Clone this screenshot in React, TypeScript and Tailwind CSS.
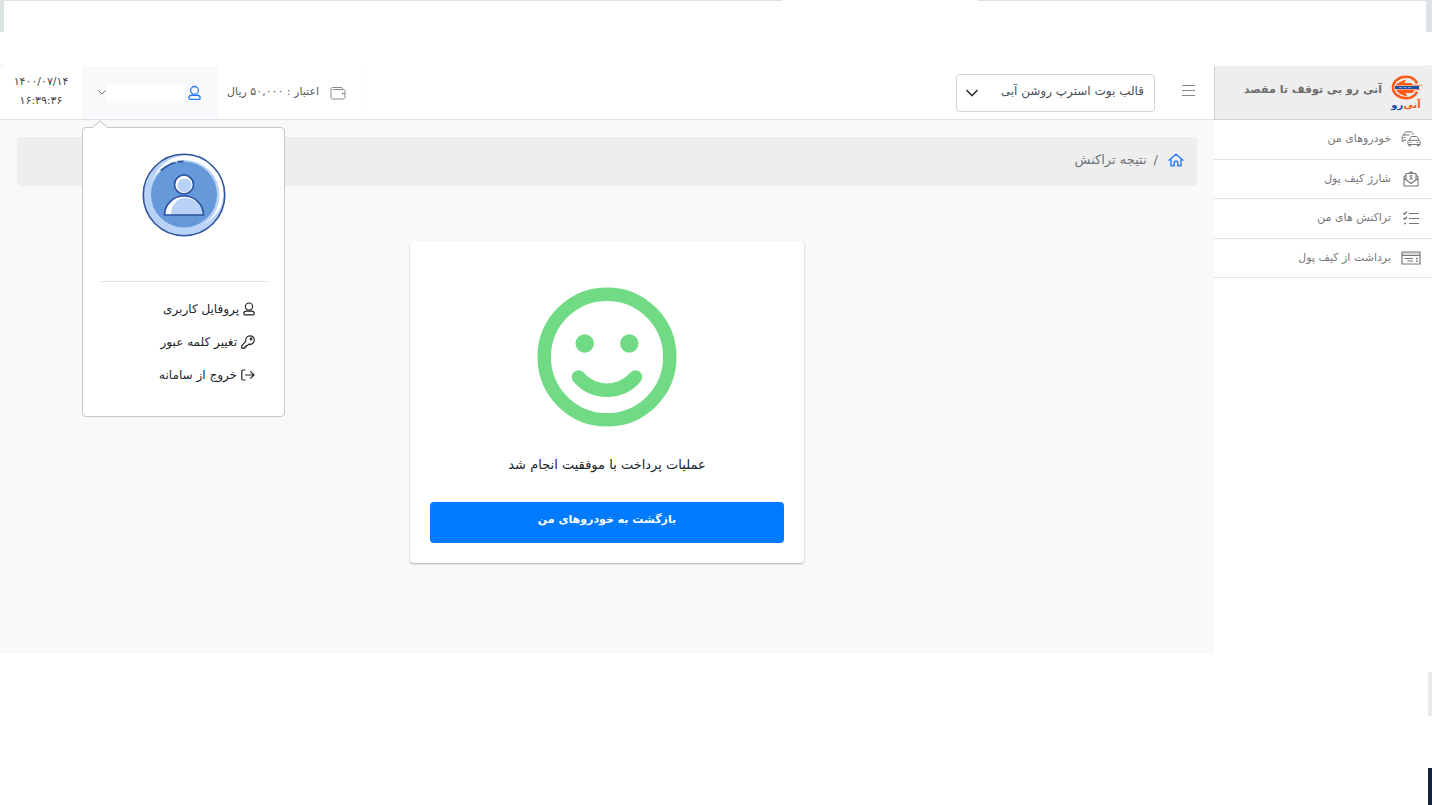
import React from 'react';

interface IconProps {
    className?: string;
}

const UserIcon: React.FC<IconProps> = ({ className }) => (
    <svg viewBox="0 0 14 16" className={className} fill="none" stroke="currentColor" strokeWidth="1.4" aria-hidden="true">
        <circle cx="7" cy="5.2" r="4.2" />
        <path d="M4 10.400h6c2 0 3 1.200 3 2.600v.600c0 .900-.4 1.300-1.300 1.300H2.300c-.9 0-1.300-.4-1.300-1.300V13c0-1.400 1-2.600 3-2.600z" />
    </svg>
);

const HomeIcon: React.FC<IconProps> = ({ className }) => (
    <svg viewBox="0 0 16 14" className={className} fill="none" stroke="currentColor" strokeWidth="1.4" strokeLinecap="round" strokeLinejoin="round" aria-hidden="true">
        <path d="M1 7.200 8 1.200l7 6M3 5.800v7h3.200V9.400a1.200 1.200 0 0 1 1.200-1.200h1.200a1.200 1.200 0 0 1 1.200 1.200v3.400H13v-7" />
    </svg>
);

const WalletIcon: React.FC<IconProps> = ({ className }) => (
    <svg viewBox="0 0 16 14" className={className} fill="none" stroke="currentColor" aria-hidden="true">
        <path d="M12.500 3.500V2.500c0-.6-.4-1-1-1H2.500c-1 0-1.500.6-1.500 1.500v8.500c0 .8.600 1.500 1.500 1.500h11c.8 0 1.500-.6 1.500-1.500V5c0-.9-.6-1.500-1.500-1.500H2.500" />
        <path d="M15 7.500h-2.500M12.500 7v1.500" />
    </svg>
);

const KeyIcon: React.FC<IconProps> = ({ className }) => (
    <svg viewBox="0 0 14 14" className={className} fill="none" stroke="currentColor" strokeWidth="1.2" strokeLinejoin="round" aria-hidden="true">
        <path d="M4.800 6.400C4.100 3.500 6 .8 9 .8c2.500 0 4.300 1.900 4.300 4.200 0 3-2.700 4.900-5.500 4.200L6.500 10.500H5.200v1.300H3.900v1.400H.8v-2.600z" />
        <circle cx="10" cy="4" r=".8" fill="currentColor" />
    </svg>
);

const LogoutIcon: React.FC<IconProps> = ({ className }) => (
    <svg viewBox="0 0 14 12" className={className} fill="none" stroke="currentColor" strokeWidth="1.2" strokeLinecap="round" strokeLinejoin="round" aria-hidden="true">
        <path d="M4 1H2C1.300 1 .8 1.500.8 2.200v7.600c0 .7.500 1.200 1.200 1.200h2M4.500 6H13M9.500 2.600 13 6 9.500 9.400" />
    </svg>
);

const CarsIcon = () => (
    <svg viewBox="0 0 20 16" className="h-4 w-5" fill="none" stroke="currentColor" strokeLinecap="round" strokeLinejoin="round" aria-hidden="true">
        <path d="M5 9H3v1.300H1.200V5.500L2.600 4 4 1.600C4.400 1 5 .8 5.600.8h4c.7 0 1.200.3 1.600.9l1 1.800M2.600 4h5.600M2.800 6.500h1.400" />
        <path d="M8.200 9.300 9.500 6.500c.3-.7.700-1 1.400-1h4.400c.7 0 1.100.3 1.400 1L18 9.300M8.200 9.300H18l1.200 1.200v3H7v-3zM8 13.500v1.500h1.500v-1.500M16.500 13.500v1.500H18v-1.500M9 11.400h1M16.200 11.400h1" />
    </svg>
);

const ChargeIcon = () => (
    <svg viewBox="0 0 16 16" className="size-4" fill="none" stroke="currentColor" strokeWidth="1.1" strokeLinejoin="round" aria-hidden="true">
        <path d="M3 4.200 1 5.800v9.200h14V5.800l-2-1.600M1 7.500 8 12.500l7-5M3 8.500V2.500h10v6M5.500 2.500 8 .8l2.500 1.700" />
        <path d="M9.500 4.800C9 4.400 6.700 4.100 6.700 5.400c0 1.200 2.700.5 2.700 1.800 0 1.200-2.300 1.100-2.900.5M8 3.900v5" strokeWidth=".8" />
    </svg>
);

const ListIcon = () => (
    <svg viewBox="0 0 16 14" className="h-3.5 w-4" fill="none" stroke="currentColor" aria-hidden="true">
        <path d="M6 2.500h10M6 7.500h10M6 12.500h10" strokeWidth="1.2" />
        <path d="m.5 2 1.200 1.200L4 .7M.5 7l1.200 1.200L4 5.700M1.200 12.500h1.800" strokeWidth="1.3" />
    </svg>
);

const CardIcon = () => (
    <svg viewBox="0 0 20 14" className="h-3.5 w-5" fill="none" stroke="currentColor" strokeWidth="1.2" aria-hidden="true">
        <path d="M1 1h18v12H1zM1 4.500h18" />
        <path d="M1 2.700h18" strokeWidth="2.4" opacity=".3" />
        <path d="M3.500 7.500h8.500M6.500 10h5.500" />
        <path d="M15 7.500h1.800M15 10.200h1.800" strokeWidth="1.6" />
    </svg>
);

const Logo = () => (
    <div className="flex w-8 flex-col items-center">
        <svg viewBox="0 0 32 25" className="h-[25px] w-8" aria-hidden="true">
            <path d="M27 8.500C25 4 21 1.800 16 1.800 8.500 1.800 3 6.500 3 12.500s5.500 10.700 13 10.700c5 0 9-2.200 11-6.500" fill="none" stroke="#ff5a16" strokeWidth="2.6" />
            <path d="M5.500 10.500C7 8 11 6 16 4.500l-1.500 3.500H21l3 2.500zM6 14.500h19L22.500 18h-7l2 3.500C12 20.500 7.500 18 6 14.500z" fill="#ff5a16" />
            <path d="M5 12.500h24" stroke="#1c4fa1" strokeWidth="3" />
            <path d="M9 12.500h14" stroke="#8fb0de" strokeWidth=".8" strokeDasharray="3 1.500" />
            <path d="M24 10.300h8M25 14.500h5" stroke="#ff5a16" strokeWidth=".8" />
        </svg>
        <span className="text-[10px] leading-[10px] font-bold whitespace-nowrap">
            <span className="text-[#ff5a16]">آنی‌</span>
            <span className="text-[#1c4fa1]">رو</span>
        </span>
    </div>
);

const Avatar = () => (
    <svg viewBox="0 0 84 84" className="size-[84px]" aria-hidden="true">
        <circle cx="42" cy="42" r="40" fill="#b9d2f8" />
        <circle cx="45.500" cy="38.500" r="36.500" fill="#fff" />
        <circle cx="42.500" cy="42" r="35" fill="#b9d2f8" />
        <circle cx="42" cy="41.500" r="33" fill="#6699da" />
        <circle cx="42" cy="42" r="40.700" fill="none" stroke="#2a52a0" strokeWidth="1.6" />
        <path d="M19 17.500A34 34 0 0 1 33.500 9.500M35.500 8.900a34 34 0 0 1 6-.6" fill="none" stroke="#2a52a0" strokeWidth="1.8" />
        <circle cx="42" cy="31.500" r="9.500" fill="#fff" />
        <circle cx="42.500" cy="32.500" r="7" fill="#b9d2f8" />
        <circle cx="42" cy="31.500" r="9.500" fill="none" stroke="#2a52a0" strokeWidth="1.7" />
        <path d="M22.500 62a19.500 19 0 0 1 39 0z" fill="#fff" />
        <path d="M29 62c0-10 6-17 14-17s18 7 18 17z" fill="#b9d2f8" />
        <path d="M22.500 62a19.500 19 0 0 1 39 0z" fill="none" stroke="#2a52a0" strokeWidth="1.7" />
    </svg>
);

const Smile = () => (
    <svg viewBox="0 0 140 140" className="size-[140px]" fill="none" stroke="#70db84" strokeWidth="13.5" aria-hidden="true">
        <circle cx="70" cy="70" r="62.800" />
        <circle cx="47.700" cy="56.500" r="9.200" fill="#70db84" stroke="none" />
        <circle cx="92.300" cy="56.500" r="9.200" fill="#70db84" stroke="none" />
        <path d="M41.500 90a37.500 37.500 0 0 0 57 0" strokeLinecap="round" />
    </svg>
);

const menuItems = [
    { label: 'خودروهای من', icon: <CarsIcon /> },
    { label: 'شارژ کیف پول', icon: <ChargeIcon /> },
    { label: 'تراکنش های من', icon: <ListIcon /> },
    { label: 'برداشت از کیف پول', icon: <CardIcon /> },
];

const profileItems = [
    { label: 'پروفایل کاربری', icon: <UserIcon className="h-3.5 w-3" /> },
    { label: 'تغییر کلمه عبور', icon: <KeyIcon className="size-3.5" /> },
    { label: 'خروج از سامانه', icon: <LogoutIcon className="h-3 w-3.5" /> },
];

const Sidebar = () => (
    <aside className="w-[218px] shrink-0">
        <div className="flex h-[54px] items-center gap-2 border-b border-l border-[#d0d0d0] bg-[#eeeeee] pr-[10px]">
            <Logo />
            <span className="pb-1 text-[11px] font-bold whitespace-nowrap text-[#6c6c6c]">آنی رو بی توقف تا مقصد</span>
        </div>
        <nav className="grid h-[158px] grid-rows-4">
            {menuItems.map((item) => (
                <a key={item.label} href="#" className="flex items-center gap-[10px] border-b border-[#dee2e6] pr-[11px] text-[#777777]">
                    <span className="flex w-5 justify-center">{item.icon}</span>
                    <span className="text-[11px]">{item.label}</span>
                </a>
            ))}
        </nav>
    </aside>
);

const ProfileMenu = () => (
    <div className="absolute top-[61px] left-0 z-10 w-[203px] rounded border border-[#c8c8c8] bg-white px-[17px] py-[25px]">
        <svg viewBox="0 0 16 8" className="absolute -top-2 left-[9px] h-2 w-4" aria-hidden="true">
            <path d="M0 8 8 1l8 7z" fill="#fff" />
            <path d="M0 8 8 1l8 7" fill="none" stroke="#bbbbbb" />
        </svg>
        <div className="flex justify-center border-b border-[#dee2e6] pb-11">
            <Avatar />
        </div>
        <ul className="pt-[10px] pr-[12px]">
            {profileItems.map((item) => (
                <li key={item.label} className="flex h-[33px] items-center">
                    <a href="#" className="flex items-center gap-1 text-xs whitespace-nowrap text-[#212529]">
                        {item.icon}
                        {item.label}
                    </a>
                </li>
            ))}
        </ul>
    </div>
);

const Header = () => (
    <header className="flex h-[54px] items-center border-b border-[#dee2e6] bg-white">
        <button type="button" aria-label="منو" className="mr-[19px] pb-1 text-[#8a8a8a]">
            <svg viewBox="0 0 13 11" className="h-[11px] w-[13px]" stroke="currentColor" aria-hidden="true">
                <path d="M0 .5h13M0 5.500h13M0 10.500h13" />
            </svg>
        </button>
        <div className="relative mr-[27px] w-[199px]">
            <select aria-label="قالب" className="h-[38px] w-full appearance-none rounded border border-[#ced4da] bg-white pr-[10px] pb-1 pl-8 text-xs text-[#495057]">
                <option>قالب بوت استرپ روشن آبی</option>
            </select>
            <svg viewBox="0 0 12 8" className="pointer-events-none absolute top-[15px] left-[10px] h-2 w-3" fill="none" stroke="#343a40" strokeWidth="1.6" aria-hidden="true">
                <path d="m.5 1 5.500 5.500L11.500 1" />
            </svg>
        </div>
        <div className="mr-auto flex h-full w-[145px] items-center gap-[11px] border-r border-[#fafafa] pr-4 text-[#555555]">
            <WalletIcon className="h-3.5 w-4 shrink-0 text-[#888888]" />
            <span className="text-[11px] whitespace-nowrap">اعتبار : ۵۰,۰۰۰ ریال</span>
        </div>
        <div className="relative h-full w-[136px]">
            <button type="button" aria-label="حساب کاربری" className="flex h-full w-full items-center bg-[#f8f9fb] pr-[17px]">
                <UserIcon className="h-4 w-[13px] text-[#2979ff]" />
                <span className="mr-[3px] h-[17px] w-[79px] bg-white" />
                <svg viewBox="0 0 8 5" className="h-[5px] w-2" fill="none" stroke="#777777" aria-hidden="true">
                    <path d="m.5.5 3.500 3.500L7.500.5" />
                </svg>
            </button>
            <ProfileMenu />
        </div>
        <div className="w-[82px] pb-[3px] text-center text-[11px] leading-[19px] text-[#444444]">
            <div>۱۴۰۰/۰۷/۱۴</div>
            <div>۱۶:۳۹:۳۶</div>
        </div>
    </header>
);

const Content = () => (
    <main className="bg-[#f8f9fb] px-[17px] pt-[17px] pb-[91px]">
        <nav className="flex h-[49px] items-center rounded bg-[#eeeeee] pr-[13px] pb-[3px] text-[13px] text-[#6c757d]">
            <a href="#" aria-label="خانه" className="text-[#2979ff]">
                <HomeIcon className="h-3.5 w-4" />
            </a>
            <span className="mr-[10px] ml-[7px]">/</span>
            <span>نتیجه تراکنش</span>
        </nav>
        <section className="mx-auto mt-[55px] flex max-w-[394px] flex-col rounded bg-white px-5 pt-[46px] pb-5 shadow-[0_1px_2px_rgba(0,0,0,0.3)]">
            <div className="flex justify-center">
                <Smile />
            </div>
            <p className="mt-[26px] text-center text-[13px] leading-6 text-[#212529]">عملیات پرداخت با موفقیت انجام شد</p>
            <button type="button" className="mt-[25px] h-[41px] rounded bg-[#007bff] pb-1 text-[11px] font-bold text-white">
                بازگشت به خودروهای من
            </button>
        </section>
    </main>
);

const App = () => {
    return (
        <div dir="rtl" className="flex min-h-screen flex-col bg-white font-['DejaVu_Sans',sans-serif]">
            <div className="flex h-8">
                <div className="w-[6px] bg-[#dde2e5]" />
                <div className="h-px w-[448px] bg-[#dee2e6]" />
                <div className="flex-1" />
                <div className="h-px w-[778px] bg-[#dee2e6]" />
                <div className="w-1 bg-[#dde2e5]" />
            </div>
            <div className="mt-[33px] flex h-px justify-between">
                <div className="w-[6px] bg-[#eeeeee]" />
                <div className="w-1 bg-[#eeeeee]" />
            </div>
            <div className="flex">
                <Sidebar />
                <div className="min-w-0 flex-1">
                    <Header />
                    <Content />
                </div>
            </div>
            <div className="flex flex-1 flex-col pt-[18px]">
                <div className="h-11 w-1 bg-[#ebebeb]" />
                <div className="mt-[52px] w-1 flex-1 bg-[#14213d]" />
            </div>
        </div>
    );
};

export default App;
